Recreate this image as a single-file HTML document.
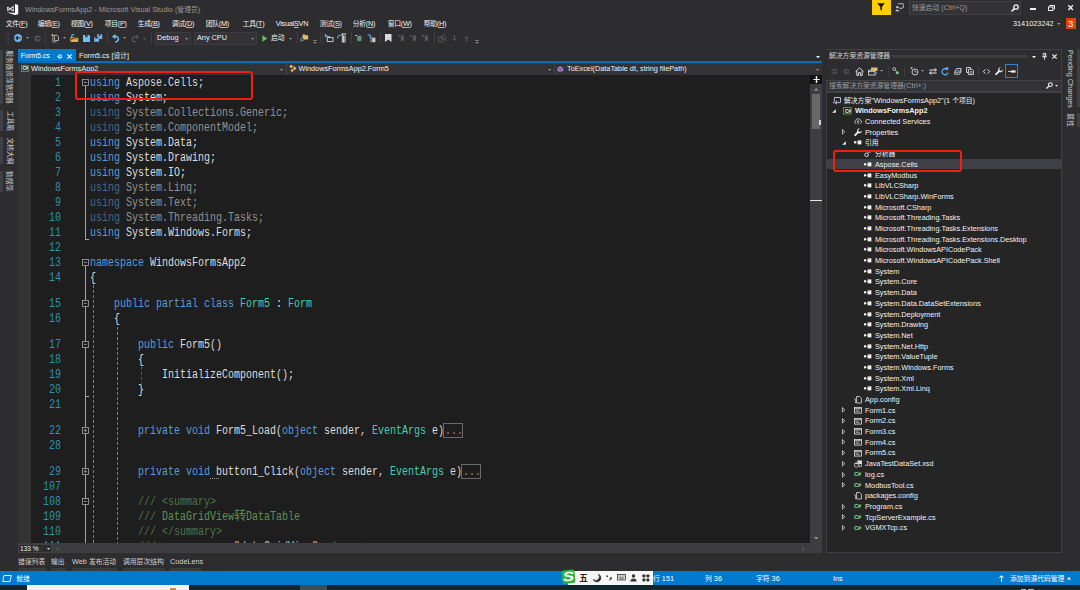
<!DOCTYPE html><html><head><meta charset="utf-8"><title>WindowsFormsApp2 - Microsoft Visual Studio</title><style>
html,body{margin:0;padding:0}
body{width:1080px;height:590px;overflow:hidden;background:#2d2d30;position:relative;font-family:"Liberation Sans","Noto Sans CJK SC",sans-serif;}
body div{position:absolute;box-sizing:border-box}
.t{height:12px;line-height:12px;white-space:pre;}
.k{font-size:6.8px}
.t u{text-decoration:underline;text-underline-offset:0.6px;text-decoration-thickness:0.5px;text-decoration-color:rgba(241,241,241,.7)}
.c{height:15px;line-height:15px;white-space:pre;font-family:"Liberation Mono","Noto Sans CJK SC",monospace;font-size:12px;transform:scaleX(0.83333);transform-origin:0 50%;color:#dcdcdc}
.c b{font-weight:normal;color:#569cd6}
.c i{font-style:normal;color:#4ec9b0}
.c u{text-decoration:none;color:#5f8f52}
.c s{text-decoration:none;color:#4f7346}
.c q{quotes:none;color:#c8c8c8}
.c em{font-style:normal;display:inline-block;width:14.4px;font-size:12px;line-height:10px;vertical-align:baseline;transform:scaleX(1.2);transform-origin:0 50%;font-family:"Noto Sans CJK SC",sans-serif}
.dim{opacity:.6}
.ln{height:15px;line-height:15px;white-space:pre;font-family:"Liberation Mono","Noto Sans CJK SC",monospace;font-size:12px;transform:scaleX(0.83333);transform-origin:100% 50%;color:#2b91af;text-align:right;width:40px}
svg{position:absolute;overflow:visible}
</style></head><body>
<svg style="left:0px;top:0px" width="24" height="18" viewBox="0 0 24 18"><path d="M15 4 18.2 4.9V14.2L15 15.1 6.6 12.2 15 13Z" fill="#ffffff"/><path d="M7 7.1 8 6.7 10.1 8.2 13.7 5.5V12.1L10.1 9.4 8 10.9 7 10.5Z M12.9 7.5 11.2 8.8 12.9 10.1Z M7.9 7.9V9.7L9 8.8Z" fill="#dcdcdc" fill-rule="evenodd"/></svg>
<div class="t" style="left:25px;top:3.5px;color:#999999;font-size:7.3px;">WindowsFormsApp2 - Microsoft Visual Studio (<span class="k">管理员</span>)</div>
<div style="left:872px;top:0px;width:19px;height:15px;background:#ffcd00;"></div>
<svg style="left:877.4px;top:3.2px" width="8" height="8" viewBox="0 0 8 8"><path d="M0.2 0.3H7.8L4.9 3.8V7.8L3.3 6.4V3.8Z" fill="#111111"/></svg>
<svg style="left:895px;top:2.6px" width="9" height="9" viewBox="0 0 10 10"><path d="M3 0.8H9.2V5.5H7.5L6.2 6.8V5.5H5" fill="none" stroke="#d0d0d0" stroke-width="0.9"/><circle cx="2.6" cy="4.6" r="1.3" fill="#d0d0d0"/><path d="M0.3 9.2C0.3 6.8 4.9 6.8 4.9 9.2Z" fill="#d0d0d0"/></svg>
<div style="left:909px;top:1px;width:112px;height:14px;background:#333337;border:1px solid #3f3f46"></div>
<div class="t" style="left:912px;top:2.2px;color:#999999;font-size:7.3px;"><span class="k">快速启动</span> (Ctrl+Q)</div>
<svg style="left:1011px;top:4px" width="8" height="8" viewBox="0 0 8 8"><circle cx="5" cy="3" r="2.2" fill="none" stroke="#f1f1f1" stroke-width="1.3"/><path d="M3.4 4.6 0.6 7.4" stroke="#f1f1f1" stroke-width="1.5"/></svg>
<div style="left:1030px;top:8px;width:6px;height:2px;background:#f1f1f1;"></div>
<svg style="left:1048px;top:4.8px" width="7" height="6" viewBox="0 0 7 6"><path d="M1.8 1.6V0.5H6.5V4H5.2" fill="none" stroke="#f1f1f1" stroke-width="1"/><rect x="0.5" y="2" width="4.4" height="3.5" fill="none" stroke="#f1f1f1" stroke-width="1"/></svg>
<svg style="left:1067.8px;top:5.4px" width="5.2" height="5.2" viewBox="0 0 5.2 5.2"><path d="M0.3 0.3 4.9 4.9M4.9 0.3 0.3 4.9" stroke="#f1f1f1" stroke-width="1.4"/></svg>
<div class="t" style="left:1013px;top:18px;color:#f1f1f1;font-size:7.3px;">3141023242</div>
<svg style="left:1056.7px;top:22.5px" width="3.6" height="2" viewBox="0 0 3.6 2"><path d="M0 0H3.6L1.8 2Z" fill="#999999"/></svg>
<div style="left:1065.5px;top:17.5px;width:10.8px;height:11.5px;background:#dc440b;"></div>
<div class="t" style="left:1068px;top:17.6px;color:#ffffff;font-size:9.5px;">3</div>
<div class="t" style="left:5.7px;top:17.5px;color:#f1f1f1;font-size:7.3px;letter-spacing:-0.25px"><span class="k">文件</span>(<u>F</u>)</div>
<div class="t" style="left:37.7px;top:17.5px;color:#f1f1f1;font-size:7.3px;letter-spacing:-0.25px"><span class="k">编辑</span>(<u>E</u>)</div>
<div class="t" style="left:70.7px;top:17.5px;color:#f1f1f1;font-size:7.3px;letter-spacing:-0.25px"><span class="k">视图</span>(<u>V</u>)</div>
<div class="t" style="left:104.7px;top:17.5px;color:#f1f1f1;font-size:7.3px;letter-spacing:-0.25px"><span class="k">项目</span>(<u>P</u>)</div>
<div class="t" style="left:137.7px;top:17.5px;color:#f1f1f1;font-size:7.3px;letter-spacing:-0.25px"><span class="k">生成</span>(<u>B</u>)</div>
<div class="t" style="left:171.7px;top:17.5px;color:#f1f1f1;font-size:7.3px;letter-spacing:-0.25px"><span class="k">调试</span>(<u>D</u>)</div>
<div class="t" style="left:205.7px;top:17.5px;color:#f1f1f1;font-size:7.3px;letter-spacing:-0.25px"><span class="k">团队</span>(<u>M</u>)</div>
<div class="t" style="left:242.7px;top:17.5px;color:#f1f1f1;font-size:7.3px;letter-spacing:-0.25px"><span class="k">工具</span>(<u>T</u>)</div>
<div class="t" style="left:275.7px;top:17.5px;color:#f1f1f1;font-size:7.3px;letter-spacing:-0.25px">Visual<u>S</u>VN</div>
<div class="t" style="left:319.7px;top:17.5px;color:#f1f1f1;font-size:7.3px;letter-spacing:-0.25px"><span class="k">测试</span>(<u>S</u>)</div>
<div class="t" style="left:352.7px;top:17.5px;color:#f1f1f1;font-size:7.3px;letter-spacing:-0.25px"><span class="k">分析</span>(<u>N</u>)</div>
<div class="t" style="left:387.7px;top:17.5px;color:#f1f1f1;font-size:7.3px;letter-spacing:-0.25px"><span class="k">窗口</span>(<u>W</u>)</div>
<div class="t" style="left:423.7px;top:17.5px;color:#f1f1f1;font-size:7.3px;letter-spacing:-0.25px"><span class="k">帮助</span>(<u>H</u>)</div>
<svg style="left:6px;top:32px" width="3" height="12" viewBox="0 0 3 12"><path d="M0.5 0V12M2.5 1V12" stroke="#46464a" stroke-width="1" stroke-dasharray="1 1"/></svg>
<svg style="left:14px;top:34px" width="8" height="8" viewBox="0 0 8 8"><circle cx="4" cy="4" r="3.9" fill="#6cb6f5"/><path d="M6.4 4H2.2M3.9 2.1 2 4 3.9 5.9" stroke="#1e1e1e" stroke-width="1.1" fill="none"/></svg>
<svg style="left:26.4px;top:37.1px" width="3.2" height="1.8" viewBox="0 0 3.2 1.8"><path d="M0 0H3.2L1.6 1.8Z" fill="#999"/></svg>
<svg style="left:33.5px;top:34.5px" width="7" height="7" viewBox="0 0 7 7"><circle cx="3.5" cy="3.5" r="3.1" fill="#555558"/><path d="M1.5 3.5H5.3M3.9 1.9 5.5 3.5 3.9 5.1" stroke="#2d2d30" stroke-width="1" fill="none"/></svg>
<div style="left:45px;top:32px;width:1px;height:12px;background:#3f3f43;"></div>
<svg style="left:50.8px;top:33.6px" width="8" height="8.2" viewBox="0 0 8 8.2"><path d="M3.4 1.2H6L7.4 2.6V6.6H3.4Z" fill="none" stroke="#d0d0d0" stroke-width="0.8"/><path d="M1.8 3V8H5.6" fill="none" stroke="#b0b0b0" stroke-width="0.8"/><path d="M1.6 -0.2 3 1.2 1.6 2.6 0.2 1.2Z" fill="#f0c060"/></svg>
<svg style="left:62.49999999999999px;top:37.1px" width="3.2" height="1.8" viewBox="0 0 3.2 1.8"><path d="M0 0H3.2L1.6 1.8Z" fill="#999"/></svg>
<svg style="left:69.6px;top:34px" width="8.6" height="8" viewBox="0 0 8.6 8"><path d="M0.8 7.4V3.4H3L3.8 4.2H7.8V7.4Z" fill="#3a3322" stroke="#e8b960" stroke-width="0.9"/><path d="M0.8 7.4 2.2 5.2H8.4L7.4 7.4Z" fill="#e8b960"/><path d="M1.6 3V2A1.6 1.6 0 0 1 3.2 0.6" fill="none" stroke="#5aa9ec" stroke-width="1.1"/><path d="M3 -0.4 4.6 0.7 3 1.8Z" fill="#5aa9ec"/></svg>
<svg style="left:82.9px;top:34.8px" width="7" height="7" viewBox="0 0 7 7"><path d="M0 0H6L7 1V7H0Z" fill="#75bdf7"/><rect x="2.2" y="0" width="2.6" height="2.2" fill="#2d2d30"/><rect x="3.6" y="0.4" width="0.8" height="1.4" fill="#75bdf7"/></svg>
<svg style="left:94.3px;top:34px" width="8.2" height="8" viewBox="0 0 8.2 8"><path d="M3.2 0H7.4L8.2 0.8V5H3.2Z" fill="#75bdf7"/><rect x="4.6" y="0" width="2" height="1.8" fill="#2d2d30"/><path d="M0 3H4.4L5.2 3.8V8H0Z" fill="#75bdf7" stroke="#2d2d30" stroke-width="0.5"/><rect x="1.4" y="3.2" width="2" height="1.6" fill="#2d2d30"/></svg>
<div style="left:107px;top:32px;width:1px;height:12px;background:#3f3f43;"></div>
<svg style="left:112px;top:33.8px" width="7.2" height="8.6" viewBox="0 0 7.2 8.6"><path d="M1.4 2.6H4A2.6 2.6 0 0 1 6 6.6L3.4 8.4" fill="none" stroke="#75bdf7" stroke-width="1.5"/><path d="M3.4 0 0 2.6 3.4 5.2Z" fill="#75bdf7"/></svg>
<svg style="left:123.4px;top:37.1px" width="3.2" height="1.8" viewBox="0 0 3.2 1.8"><path d="M0 0H3.2L1.6 1.8Z" fill="#999"/></svg>
<svg style="left:131px;top:34px" width="8" height="8" viewBox="0 0 8 8"><path d="M6.8 2.8H3.6A2.4 2.4 0 0 0 3.6 7.6H5" fill="none" stroke="#55555a" stroke-width="1.2"/><path d="M5.2 0.4 8 2.8 5.2 5.2Z" fill="#55555a"/></svg>
<svg style="left:143.4px;top:37.6px" width="3.2" height="1.8" viewBox="0 0 3.2 1.8"><path d="M0 0H3.2L1.6 1.8Z" fill="#5a5a5e"/></svg>
<div style="left:151px;top:32px;width:1px;height:12px;background:#3f3f43;"></div>
<div style="left:154.5px;top:31.5px;width:36.5px;height:13px;background:#333337;border:1px solid #3c3c40"></div>
<div class="t" style="left:157px;top:32.2px;color:#f1f1f1;font-size:7.3px;">Debug</div>
<svg style="left:185.4px;top:37.6px" width="3.2" height="1.8" viewBox="0 0 3.2 1.8"><path d="M0 0H3.2L1.6 1.8Z" fill="#999"/></svg>
<div style="left:194px;top:31.5px;width:63px;height:13px;background:#333337;border:1px solid #3c3c40"></div>
<div class="t" style="left:197px;top:32.2px;color:#f1f1f1;font-size:7.3px;">Any CPU</div>
<svg style="left:250.9px;top:37.6px" width="3.2" height="1.8" viewBox="0 0 3.2 1.8"><path d="M0 0H3.2L1.6 1.8Z" fill="#999"/></svg>
<svg style="left:262px;top:34.5px" width="6" height="7" viewBox="0 0 6 7"><path d="M0.3 0.2 5.6 3.5 0.3 6.8Z" fill="#5cc15c"/></svg>
<div class="t" style="left:271px;top:32.2px;color:#f1f1f1;font-size:7.3px;"><span class="k">启动</span></div>
<svg style="left:288.9px;top:37.6px" width="3.2" height="1.8" viewBox="0 0 3.2 1.8"><path d="M0 0H3.2L1.6 1.8Z" fill="#999"/></svg>
<div style="left:297px;top:32px;width:1px;height:12px;background:#3f3f43;"></div>
<svg style="left:300.3px;top:33.8px" width="8.6" height="8.6" viewBox="0 0 10 10"><path d="M3 0.5H6L6.8 1.4H9.5V6.5H3Z" fill="#e8b960"/><circle cx="2.8" cy="6" r="1.7" fill="#2d2d30" stroke="#7cc0f5" stroke-width="0.9"/><path d="M1.6 7.3 0.2 9" stroke="#7cc0f5" stroke-width="1"/></svg>
<svg style="left:312.5px;top:40px" width="4" height="4" viewBox="0 0 4 4"><path d="M0.3 0.5H3.7" stroke="#999" stroke-width="0.8"/><path d="M0.3 2H3.7L2 3.8Z" fill="#999"/></svg>
<svg style="left:320px;top:32px" width="3" height="12" viewBox="0 0 3 12"><path d="M0.5 0V12M2.5 1V12" stroke="#46464a" stroke-width="1" stroke-dasharray="1 1"/></svg>
<svg style="left:324px;top:33px" width="10" height="10" viewBox="0 0 10 10"><path d="M0.8 0.5 4 3 0.8 4.2Z" fill="#5aa9ec"/><rect x="3.2" y="4.6" width="5.8" height="4" fill="none" stroke="#d8d8d8" stroke-width="0.9"/><path d="M3.2 3.8H6" stroke="#d8d8d8" stroke-width="0.9"/></svg>
<svg style="left:337px;top:33px" width="10" height="10" viewBox="0 0 10 10"><path d="M1 2.4H4" stroke="#5aa9ec" stroke-width="1"/><path d="M4.2 1H9.2M5.3 1V9.6M8 2.4V9.6M6.6 2.4V9.6" stroke="#d8d8d8" stroke-width="1"/><path d="M0.8 3.2V5.5" stroke="#d8d8d8" stroke-width="0.8"/></svg>
<div style="left:351px;top:32px;width:1px;height:12px;background:#3f3f43;"></div>
<svg style="left:355px;top:34.5px" width="7" height="7" viewBox="0 0 7 7"><path d="M0 0.5H2" stroke="#d8d8d8" stroke-width="0.8"/><rect x="2.2" y="1" width="4.2" height="5.2" fill="#4d8a5a"/><path d="M2 1.2H6.5M2 3H6.5M2 4.8H6.5" stroke="#9a9a9a" stroke-width="0.6"/></svg>
<svg style="left:367px;top:33.5px" width="9" height="9" viewBox="0 0 9 9"><path d="M0.8 1.6Q2.3 0 3.4 1.4T2.4 3.6" fill="none" stroke="#5aa9ec" stroke-width="1.1"/><rect x="3.6" y="3.6" width="4.8" height="4.6" fill="#c8c8c8"/><path d="M4.8 3.6V8.2" stroke="#2d2d30" stroke-width="0.7"/></svg>
<div style="left:380px;top:32px;width:1px;height:12px;background:#3f3f43;"></div>
<svg style="left:385px;top:34px" width="7" height="8" viewBox="0 0 7 8"><path d="M0 0H6.5V8L3.25 5.6 0 8Z" fill="#dadada"/></svg>
<svg style="left:397px;top:34px" width="8" height="8" viewBox="0 0 8 8"><path d="M0.5 1.2 2.6 2.8M2.8 0.4V3" stroke="#58585c" stroke-width="0.9"/><path d="M3.8 1.6H7V7.6L5.4 6.2 3.8 7.6Z" fill="#58585c"/></svg>
<svg style="left:409px;top:34px" width="8" height="8" viewBox="0 0 8 8"><path d="M0.4 1.6H2.8M1.8 0.4 3 1.6 1.8 2.8" stroke="#58585c" stroke-width="0.9" fill="none"/><path d="M3.8 1.6H7V7.6L5.4 6.2 3.8 7.6Z" fill="#58585c"/></svg>
<svg style="left:421px;top:34px" width="8" height="8" viewBox="0 0 8 8"><path d="M0.4 0.6 3 2.8M3 0.6 0.4 2.8" stroke="#58585c" stroke-width="0.9"/><path d="M3.8 1.6H7V7.6L5.4 6.2 3.8 7.6Z" fill="#58585c"/></svg>
<div style="left:434px;top:32px;width:1px;height:12px;background:#3f3f43;"></div>
<svg style="left:438px;top:33.5px" width="9" height="9" viewBox="0 0 9 9"><rect x="0.5" y="3.2" width="4.4" height="4.6" fill="none" stroke="#58585c" stroke-width="0.9"/><circle cx="5.4" cy="3.2" r="2.3" fill="none" stroke="#58585c" stroke-width="0.9"/><path d="M6.8 5 8.6 7.4" stroke="#58585c" stroke-width="1"/></svg>
<svg style="left:451.5px;top:35px" width="5" height="6" viewBox="0 0 5 6"><path d="M2.5 0V5.4M0.4 3.4 2.5 5.6 4.6 3.4" stroke="#58585c" stroke-width="0.9" fill="none"/></svg>
<svg style="left:464px;top:35.5px" width="5" height="6" viewBox="0 0 5 6"><path d="M2.5 6V0.6M0.4 2.6 2.5 0.4 4.6 2.6" stroke="#58585c" stroke-width="0.9" fill="none"/></svg>
<svg style="left:474.5px;top:40px" width="4" height="4" viewBox="0 0 4 4"><path d="M0.3 0.5H3.7" stroke="#999" stroke-width="0.8"/><path d="M0.3 2H3.7L2 3.8Z" fill="#999"/></svg>
<div style="left:0px;top:49.5px;width:3px;height:54.5px;background:#3f3f46;"></div>
<div class="t" style="left:-18.25px;top:70.75px;width:54.5px;text-align:center;color:#d0d0d0;font-size:6.7px;transform:rotate(90deg);transform-origin:50% 50%">服务器资源管理器</div>
<div style="left:0px;top:110px;width:3px;height:21px;background:#3f3f46;"></div>
<div class="t" style="left:-1.5px;top:114.5px;width:21px;text-align:center;color:#d0d0d0;font-size:6.7px;transform:rotate(90deg);transform-origin:50% 50%">工具箱</div>
<div style="left:0px;top:137px;width:3px;height:27px;background:#3f3f46;"></div>
<div class="t" style="left:-4.5px;top:144.5px;width:27px;text-align:center;color:#d0d0d0;font-size:6.7px;transform:rotate(90deg);transform-origin:50% 50%">文档大纲</div>
<div style="left:0px;top:171px;width:3px;height:20.5px;background:#3f3f46;"></div>
<div class="t" style="left:-1.25px;top:175.25px;width:20.5px;text-align:center;color:#d0d0d0;font-size:6.7px;transform:rotate(90deg);transform-origin:50% 50%">数据源</div>
<div style="left:18px;top:49px;width:58px;height:14px;background:#007acc;"></div>
<div class="t" style="left:20.8px;top:50.3px;color:#ffffff;font-size:7.3px;letter-spacing:-0.2px">Form5.cs</div>
<svg style="left:56.5px;top:53.5px" width="6" height="5" viewBox="0 0 6 5"><path d="M0 2.5H1.8" stroke="#d6ebfa" stroke-width="0.8"/><path d="M2 1H4.6V4H2Z" fill="none" stroke="#d6ebfa" stroke-width="0.8"/><path d="M2 3.4H4.6" stroke="#d6ebfa" stroke-width="1"/><path d="M1.9 0.3V4.7" stroke="#d6ebfa" stroke-width="0.8"/></svg>
<svg style="left:67px;top:53.8px" width="5" height="5" viewBox="0 0 5 5"><path d="M0.3 0.3 4.7 4.7M4.7 0.3 0.3 4.7" stroke="#ffffff" stroke-width="1.1"/></svg>
<div class="t" style="left:79px;top:50.3px;color:#f1f1f1;font-size:7.3px;">Form5.cs [<span class="k">设计</span>]</div>
<svg style="left:816.0px;top:55.9px" width="4" height="2.2" viewBox="0 0 4 2.2"><path d="M0 0H4L2.0 2.2Z" fill="#f1f1f1"/></svg>
<div style="left:18px;top:61px;width:804px;height:1px;background:#10669f;"></div>
<div style="left:18px;top:62px;width:804px;height:1px;background:#0474c2;"></div>
<div style="left:18px;top:63.2px;width:804px;height:11.8px;background:#2d2d30;"></div>
<div style="left:18px;top:63px;width:268.6px;height:12px;background:#333337;border-right:1px solid #434346"></div>
<div style="left:286.6px;top:63px;width:268.4px;height:12px;background:#333337;border-right:1px solid #434346"></div>
<div style="left:555px;top:63px;width:267px;height:12px;background:#333337;"></div>
<svg style="left:21px;top:64.6px" width="7.7" height="7.4" viewBox="0 0 7.5 6.5"><rect x="0.4" y="0.4" width="6.7" height="5.7" fill="none" stroke="#6aa84f" stroke-width="0.8"/></svg>
<div class="t" style="left:22.4px;top:63.4px;color:#f1f1f1;font-size:4.8px;font-weight:bold;letter-spacing:-0.3px">C#</div>
<div class="t" style="left:31px;top:63.2px;color:#f1f1f1;font-size:7.3px;">WindowsFormsApp2</div>
<svg style="left:280.4px;top:68.6px" width="3.2" height="1.8" viewBox="0 0 3.2 1.8"><path d="M0 0H3.2L1.6 1.8Z" fill="#999"/></svg>
<svg style="left:289px;top:64.2px" width="8.4" height="8.4" viewBox="0 0 8 8"><path d="M2 0.5 3.8 2.3 2 4.1 0.2 2.3Z" fill="#e8b960"/><path d="M5.4 2.4 7.2 4.2 5.4 6 3.6 4.2Z" fill="#e8b960"/><path d="M3 4.6 4.6 6.2 3 7.8 1.4 6.2Z" fill="#e8b960"/><path d="M3.6 2.3H5.4V2.6M3 4.2V4.6" stroke="#c0c0c0" stroke-width="0.5" fill="none"/></svg>
<div class="t" style="left:298.5px;top:63.2px;color:#f1f1f1;font-size:7.3px;">WindowsFormsApp2.Form5</div>
<svg style="left:548.4px;top:68.6px" width="3.2" height="1.8" viewBox="0 0 3.2 1.8"><path d="M0 0H3.2L1.6 1.8Z" fill="#999"/></svg>
<svg style="left:557px;top:66px" width="6.5" height="6.5" viewBox="0 0 6.5 6.5"><path d="M3.25 0.2 6.2 1.7V4.8L3.25 6.3 0.3 4.8V1.7Z" fill="#a77fd4"/><path d="M0.6 1.8 3.25 3.2 5.9 1.8M3.25 3.2V6" stroke="#3a2a55" stroke-width="0.5" fill="none"/></svg>
<div class="t" style="left:567px;top:63.2px;color:#f1f1f1;font-size:7.3px;">ToExcel(DataTable dt, string filePath)</div>
<svg style="left:816.4px;top:68.6px" width="3.2" height="1.8" viewBox="0 0 3.2 1.8"><path d="M0 0H3.2L1.6 1.8Z" fill="#999"/></svg>
<div style="left:18px;top:75px;width:791.5px;height:469px;background:#1e1e1e;"></div>
<div style="left:18px;top:75px;width:13.3px;height:469px;background:#333333;"></div>
<div style="left:18px;top:75px;width:791.5px;height:469px;overflow:hidden">
<div class="ln" style="left:3px;top:1.3px">1</div>
<div class="c" style="left:72px;top:1.3px"><b>using</b> Aspose.Cells;</div>
<div class="ln" style="left:3px;top:16.3px">2</div>
<div class="c" style="left:72px;top:16.3px"><b>using</b> System;</div>
<div class="ln" style="left:3px;top:31.3px">3</div>
<div class="c dim" style="left:72px;top:31.3px"><b>using</b> System.Collections.Generic;</div>
<div class="ln" style="left:3px;top:46.3px">4</div>
<div class="c dim" style="left:72px;top:46.3px"><b>using</b> System.ComponentModel;</div>
<div class="ln" style="left:3px;top:61.3px">5</div>
<div class="c" style="left:72px;top:61.3px"><b>using</b> System.Data;</div>
<div class="ln" style="left:3px;top:76.3px">6</div>
<div class="c" style="left:72px;top:76.3px"><b>using</b> System.Drawing;</div>
<div class="ln" style="left:3px;top:91.3px">7</div>
<div class="c" style="left:72px;top:91.3px"><b>using</b> System.IO;</div>
<div class="ln" style="left:3px;top:106.3px">8</div>
<div class="c dim" style="left:72px;top:106.3px"><b>using</b> System.Linq;</div>
<div class="ln" style="left:3px;top:121.3px">9</div>
<div class="c dim" style="left:72px;top:121.3px"><b>using</b> System.Text;</div>
<div class="ln" style="left:3px;top:136.3px">10</div>
<div class="c dim" style="left:72px;top:136.3px"><b>using</b> System.Threading.Tasks;</div>
<div class="ln" style="left:3px;top:151.3px">11</div>
<div class="c" style="left:72px;top:151.3px"><b>using</b> System.Windows.Forms;</div>
<div class="ln" style="left:3px;top:166.3px">12</div>
<div class="ln" style="left:3px;top:181.3px">13</div>
<div class="c" style="left:72px;top:181.3px"><b>namespace</b> WindowsFormsApp2</div>
<div class="ln" style="left:3px;top:196.3px">14</div>
<div class="c" style="left:72px;top:196.3px">{</div>
<div class="ln" style="left:3px;top:222.3px">15</div>
<div class="c" style="left:72px;top:222.3px">    <b>public</b> <b>partial</b> <b>class</b> <i>Form5</i> : <i>Form</i></div>
<div class="ln" style="left:3px;top:237.3px">16</div>
<div class="c" style="left:72px;top:237.3px">    {</div>
<div class="ln" style="left:3px;top:263.3px">17</div>
<div class="c" style="left:72px;top:263.3px">        <b>public</b> Form5()</div>
<div class="ln" style="left:3px;top:278.3px">18</div>
<div class="c" style="left:72px;top:278.3px">        {</div>
<div class="ln" style="left:3px;top:293.3px">19</div>
<div class="c" style="left:72px;top:293.3px">            InitializeComponent();</div>
<div class="ln" style="left:3px;top:308.3px">20</div>
<div class="c" style="left:72px;top:308.3px">        }</div>
<div class="ln" style="left:3px;top:323.3px">21</div>
<div class="ln" style="left:3px;top:349.3px">22</div>
<div class="c" style="left:72px;top:349.3px">        <b>private</b> <b>void</b> Form5_Load(<b>object</b> sender, <i>EventArgs</i> e)</div>
<div class="ln" style="left:3px;top:364.3px">28</div>
<div class="ln" style="left:3px;top:390.3px">29</div>
<div class="c" style="left:72px;top:390.3px">        <b>private</b> <b>void</b> button1_Click(<b>object</b> sender, <i>EventArgs</i> e)</div>
<div class="ln" style="left:3px;top:405.3px">107</div>
<div class="ln" style="left:3px;top:420.3px">108</div>
<div class="c" style="left:72px;top:420.3px">        <s>///</s> <s>&lt;summary&gt;</s></div>
<div class="ln" style="left:3px;top:435.3px">109</div>
<div class="c" style="left:72px;top:435.3px">        <s>///</s> <u>DataGridView<em>转</em>DataTable</u></div>
<div class="ln" style="left:3px;top:450.3px">110</div>
<div class="c" style="left:72px;top:450.3px">        <s>///</s> <s>&lt;/summary&gt;</s></div>
<div class="ln" style="left:3px;top:465.3px">111</div>
<div class="c" style="left:72px;top:465.3px">        <s>///</s> <s>&lt;param name=</s><q>"dataGridView"</q><s>&gt;&lt;/param&gt;</s></div>
</div>
<div style="left:85px;top:86px;width:1px;height:153.5px;background:#a5a5a5;"></div>
<div style="left:85px;top:239px;width:4px;height:1px;background:#a5a5a5;"></div>
<div style="left:85px;top:266px;width:1px;height:278px;background:#a5a5a5;"></div>
<div style="left:85px;top:396px;width:4px;height:1px;background:#a5a5a5;"></div>
<svg style="left:82px;top:78.69999999999999px" width="6.8" height="6.8" viewBox="0 0 6.8 6.8"><rect x="0.4" y="0.4" width="6" height="6" fill="#1e1e1e" stroke="#a5a5a5" stroke-width="0.8"/><path d="M1.8 3.4H5" stroke="#a5a5a5" stroke-width="0.8"/></svg>
<svg style="left:82px;top:258.70000000000005px" width="6.8" height="6.8" viewBox="0 0 6.8 6.8"><rect x="0.4" y="0.4" width="6" height="6" fill="#1e1e1e" stroke="#a5a5a5" stroke-width="0.8"/><path d="M1.8 3.4H5" stroke="#a5a5a5" stroke-width="0.8"/></svg>
<svg style="left:82px;top:299.70000000000005px" width="6.8" height="6.8" viewBox="0 0 6.8 6.8"><rect x="0.4" y="0.4" width="6" height="6" fill="#1e1e1e" stroke="#a5a5a5" stroke-width="0.8"/><path d="M1.8 3.4H5" stroke="#a5a5a5" stroke-width="0.8"/></svg>
<svg style="left:82px;top:340.70000000000005px" width="6.8" height="6.8" viewBox="0 0 6.8 6.8"><rect x="0.4" y="0.4" width="6" height="6" fill="#1e1e1e" stroke="#a5a5a5" stroke-width="0.8"/><path d="M1.8 3.4H5" stroke="#a5a5a5" stroke-width="0.8"/></svg>
<svg style="left:82px;top:497.70000000000005px" width="6.8" height="6.8" viewBox="0 0 6.8 6.8"><rect x="0.4" y="0.4" width="6" height="6" fill="#1e1e1e" stroke="#a5a5a5" stroke-width="0.8"/><path d="M1.8 3.4H5" stroke="#a5a5a5" stroke-width="0.8"/></svg>
<svg style="left:82px;top:426.70000000000005px" width="6.8" height="6.8" viewBox="0 0 6.8 6.8"><rect x="0.4" y="0.4" width="6" height="6" fill="#1e1e1e" stroke="#a5a5a5" stroke-width="0.8"/><path d="M1.8 3.4H5" stroke="#a5a5a5" stroke-width="0.8"/><path d="M3.4 1.8V5" stroke="#a5a5a5" stroke-width="0.8"/></svg>
<svg style="left:82px;top:467.70000000000005px" width="6.8" height="6.8" viewBox="0 0 6.8 6.8"><rect x="0.4" y="0.4" width="6" height="6" fill="#1e1e1e" stroke="#a5a5a5" stroke-width="0.8"/><path d="M1.8 3.4H5" stroke="#a5a5a5" stroke-width="0.8"/><path d="M3.4 1.8V5" stroke="#a5a5a5" stroke-width="0.8"/></svg>
<div style="left:93px;top:285px;width:1px;height:259px;background-image:linear-gradient(#7c7c7c 58%,transparent 58%);background-size:1px 5px"></div>
<div style="left:117px;top:327px;width:1px;height:217px;background-image:linear-gradient(#7c7c7c 58%,transparent 58%);background-size:1px 5px"></div>
<div style="left:141px;top:367px;width:1px;height:16px;background-image:linear-gradient(#585858 58%,transparent 58%);background-size:1px 5px"></div>
<div style="left:443px;top:423.09999999999997px;width:20px;height:14.6px;background:transparent;border:0.8px solid #6a6a6a"></div>
<div class="c" style="left:444.5px;top:424.3px;color:#8a8a8a">...</div>
<div style="left:461px;top:464.09999999999997px;width:20px;height:14.6px;background:transparent;border:0.8px solid #6a6a6a"></div>
<div class="c" style="left:462.5px;top:465.3px;color:#8a8a8a">...</div>
<div style="left:210px;top:478px;width:10px;height:1px;background-image:linear-gradient(90deg,#9a9a9a 50%,transparent 50%);background-size:2px 1px"></div>
<div style="left:809.5px;top:75px;width:12.5px;height:469px;background:#3e3e42;"></div>
<div style="left:809.5px;top:75px;width:12.5px;height:9px;background:#111111;"></div>
<svg style="left:812.5px;top:76px" width="7" height="7" viewBox="0 0 7 7"><path d="M3.5 0V7M0.3 3.5H6.7" stroke="#f1f1f1" stroke-width="1.2"/><path d="M2 1.6 3.5 0.2 5 1.6ZM2 5.4 3.5 6.8 5 5.4Z" fill="#f1f1f1"/></svg>
<svg style="left:813.5px;top:88px" width="4.4" height="2.6" viewBox="0 0 4.4 2.6"><path d="M0 2.6 2.2 0 4.4 2.6Z" fill="#999"/></svg>
<div style="left:811.5px;top:94px;width:8.5px;height:34.5px;background:#686868;"></div>
<div style="left:818.5px;top:119.5px;width:2.2px;height:5px;background:#d0d0d0;"></div>
<div style="left:809.5px;top:200px;width:12.5px;height:0.8px;background:#e6e6e6;"></div>
<svg style="left:813.5px;top:537px" width="4.4" height="2.6" viewBox="0 0 4.4 2.6"><path d="M0 0H4.4L2.2 2.6Z" fill="#999"/></svg>
<div style="left:18px;top:543px;width:804px;height:10px;background:#3e3e42;"></div>
<div style="left:18px;top:543.5px;width:33.8px;height:9.5px;background:#2d2d30;border:1px solid #434346"></div>
<div class="t" style="left:20px;top:542.6px;color:#f1f1f1;font-size:6.6px;">133 %</div>
<svg style="left:47.3px;top:547.9499999999999px" width="3" height="1.7" viewBox="0 0 3 1.7"><path d="M0 0H3L1.5 1.7Z" fill="#f1f1f1"/></svg>
<svg style="left:55.8px;top:546.8px" width="2.6" height="4" viewBox="0 0 2.6 4"><path d="M2.6 0V4L0 2Z" fill="#55555a"/></svg>
<svg style="left:802px;top:547px" width="2.6" height="4" viewBox="0 0 2.6 4"><path d="M0 0V4L2.6 2Z" fill="#55555a"/></svg>
<div style="left:809.5px;top:544px;width:12.5px;height:9px;background:#3e3e42;"></div>
<div class="t" style="left:829px;top:50.3px;color:#d0d0d0;font-size:7.3px;"><span class="k">解决方案资源管理器</span></div>
<div style="left:892px;top:55px;width:136px;height:3px;background-image:linear-gradient(90deg,#4a4a50 50%,transparent 50%),linear-gradient(90deg,transparent 50%,#4a4a50 50%),linear-gradient(90deg,#4a4a50 50%,transparent 50%);background-size:2px 1px;background-position:0 0,0 1px,0 2px;background-repeat:repeat-x"></div>
<div style="left:826px;top:49px;width:236px;height:1px;background:#3f3f46;"></div>
<div style="left:1061px;top:49px;width:1px;height:504px;background:#3f3f46;"></div>
<div style="left:825px;top:49px;width:1px;height:504px;background:#2a2a2d;"></div>
<svg style="left:1032.0px;top:55.9px" width="4" height="2.2" viewBox="0 0 4 2.2"><path d="M0 0H4L2.0 2.2Z" fill="#f1f1f1"/></svg>
<svg style="left:1041.5px;top:53px" width="5" height="7" viewBox="0 0 5 7"><path d="M1.2 0.4H3.8V3.6H1.2Z" fill="none" stroke="#f1f1f1" stroke-width="0.8"/><path d="M3.2 0.4V3.6" stroke="#f1f1f1" stroke-width="1"/><path d="M0.2 3.8H4.8M2.5 3.8V6.8" stroke="#f1f1f1" stroke-width="0.8"/></svg>
<svg style="left:1051.5px;top:54.3px" width="5" height="5" viewBox="0 0 5 5"><path d="M0.3 0.3 4.7 4.7M4.7 0.3 0.3 4.7" stroke="#f1f1f1" stroke-width="1.1"/></svg>
<svg style="left:830.5px;top:67.5px" width="7" height="7" viewBox="0 0 7 7"><circle cx="3.5" cy="3.5" r="3" fill="#4a4a4e"/><path d="M5.3 3.5H1.9M3.2 2.2 1.8 3.5 3.2 4.8" stroke="#2d2d30" stroke-width="0.8" fill="none"/></svg>
<svg style="left:843px;top:67.5px" width="7" height="7" viewBox="0 0 7 7"><circle cx="3.5" cy="3.5" r="3" fill="#4a4a4e"/><path d="M1.7 3.5H5.1M3.8 2.2 5.2 3.5 3.8 4.8" stroke="#2d2d30" stroke-width="0.8" fill="none"/></svg>
<svg style="left:855px;top:66.5px" width="9" height="9" viewBox="0 0 9 9"><path d="M0.6 4.6 4.5 0.8 8.4 4.6M1.8 3.8V8.4H3.6V5.6H5.4V8.4H7.2V3.8" fill="none" stroke="#f1f1f1" stroke-width="0.9"/></svg>
<svg style="left:868px;top:66.5px" width="10" height="9" viewBox="0 0 10 9"><path d="M3 0.5H9.5V4H3Z" fill="#e8b960"/><rect x="0.6" y="3.2" width="6.4" height="4.8" fill="#2d2d30" stroke="#d8d8d8" stroke-width="0.9"/><path d="M0.6 4.6H7" stroke="#d8d8d8" stroke-width="0.9"/><path d="M8.2 5V7.2H7.2" stroke="#5aa9ec" stroke-width="0.9" fill="none"/></svg>
<svg style="left:880.4px;top:70.3px" width="3.2" height="1.8" viewBox="0 0 3.2 1.8"><path d="M0 0H3.2L1.6 1.8Z" fill="#999"/></svg>
<div style="left:888px;top:65.5px;width:1px;height:11px;background:#3d3d41;"></div>
<svg style="left:892px;top:67px" width="7" height="8" viewBox="0 0 7 8"><circle cx="2.2" cy="2" r="1.5" fill="none" stroke="#c8c8c8" stroke-width="0.8"/><path d="M3.3 3 4.6 4.6" stroke="#c8c8c8" stroke-width="0.8"/><circle cx="5.3" cy="5.8" r="1.5" fill="#7ed07e"/></svg>
<div style="left:904px;top:65.5px;width:1px;height:11px;background:#3d3d41;"></div>
<svg style="left:910px;top:66.5px" width="9" height="9" viewBox="0 0 9 9"><circle cx="5" cy="5" r="3" fill="none" stroke="#d8d8d8" stroke-width="0.9"/><path d="M5 3.4V5H6.4" stroke="#d8d8d8" stroke-width="0.8" fill="none"/><path d="M0.2 0.6H3L1.6 2.4Z" fill="#d8d8d8"/></svg>
<svg style="left:921.4px;top:70.3px" width="3.2" height="1.8" viewBox="0 0 3.2 1.8"><path d="M0 0H3.2L1.6 1.8Z" fill="#999"/></svg>
<svg style="left:929px;top:67.5px" width="8" height="7" viewBox="0 0 8 7"><path d="M0.4 2H7.4M5.6 0.4 7.4 2 5.6 3.6M7.6 5H0.6M2.4 3.4 0.6 5 2.4 6.6" fill="none" stroke="#f1f1f1" stroke-width="0.95"/></svg>
<svg style="left:941px;top:66.8px" width="8" height="8.4" viewBox="0 0 8 8.4"><path d="M6.6 3.2A3 3 0 1 0 6.9 5.6" fill="none" stroke="#5aa9ec" stroke-width="1.3"/><path d="M4.4 0 7.6 0.6 6.8 3.8Z" fill="#5aa9ec"/></svg>
<svg style="left:953.5px;top:67.5px" width="8" height="7" viewBox="0 0 8 7"><path d="M2.4 0.6H7.4L5.6 4.2H0.6Z" fill="none" stroke="#d8d8d8" stroke-width="0.9"/><path d="M0.6 4.6V6.2H5.6L7.4 2.6" fill="none" stroke="#d8d8d8" stroke-width="0.9"/><path d="M2.8 2.6H5" stroke="#5aa9ec" stroke-width="0.9"/></svg>
<svg style="left:966px;top:67px" width="8" height="8" viewBox="0 0 8 8"><path d="M0.5 0.5H4.5V2M0.5 0.5V5.5H2" fill="none" stroke="#d8d8d8" stroke-width="0.9"/><path d="M2.4 2.2H6L7.5 3.7V7.6H2.4Z" fill="none" stroke="#d8d8d8" stroke-width="0.9"/><circle cx="5" cy="5.4" r="1.1" fill="none" stroke="#d8d8d8" stroke-width="0.7"/></svg>
<div style="left:978px;top:65.5px;width:1px;height:11px;background:#3d3d41;"></div>
<svg style="left:983px;top:68.5px" width="7" height="5" viewBox="0 0 7 5"><path d="M2.4 0.3 0.4 2.5 2.4 4.7M4.6 0.3 6.6 2.5 4.6 4.7" fill="none" stroke="#f1f1f1" stroke-width="0.9"/></svg>
<svg style="left:994.8px;top:66.8px" width="8.3" height="8.3" viewBox="0 0 8.3 8.3"><path d="M5.7 0.3A2.6 2.6 0 0 0 3.2 3.8L0.3 6.7A0.95 0.95 0 0 0 1.6 8L4.5 5.1A2.6 2.6 0 0 0 8 2.6L6.3 4 4.6 3.6 4.2 2Z" fill="#f1f1f1"/></svg>
<div style="left:1005px;top:64.3px;width:13.3px;height:13.3px;background:transparent;border:1px solid #2f86d6"></div>
<svg style="left:1008px;top:69.5px" width="8" height="3" viewBox="0 0 8 3"><path d="M0 1.5H3" stroke="#f1f1f1" stroke-width="0.8"/><rect x="3" y="0.4" width="4.6" height="2.2" fill="#f1f1f1"/></svg>
<div style="left:826px;top:80px;width:235.5px;height:11.5px;background:#333337;border:0.5px solid #434346"></div>
<div class="t" style="left:829px;top:80px;color:#999999;font-size:7.3px;"><span class="k">搜索解决方案资源管理器</span>(Ctrl+;)</div>
<svg style="left:1045.5px;top:82px" width="7" height="7" viewBox="0 0 7 7"><circle cx="4.4" cy="2.6" r="1.9" fill="none" stroke="#f1f1f1" stroke-width="1.1"/><path d="M3 4 0.5 6.5" stroke="#f1f1f1" stroke-width="1.3"/></svg>
<svg style="left:1055.2px;top:85.35000000000001px" width="3" height="1.7" viewBox="0 0 3 1.7"><path d="M0 0H3L1.5 1.7Z" fill="#f1f1f1"/></svg>
<div style="left:826px;top:91.5px;width:235.5px;height:461.5px;background:#252526;border:0.5px solid #3f3f46"></div>
<div style="left:826.5px;top:158.8px;width:234.5px;height:10.7px;background:#3f3f46;"></div>
<svg style="left:832.5px;top:96.60000000000001px" width="8" height="7.4" viewBox="0 0 8 7.4"><path d="M1.4 4V0.5H7.5V5.6H4.6" fill="none" stroke="#e0e0e0" stroke-width="0.8"/><path d="M3.4 3.4 4.4 3.9V6.9L3.4 7.4 1.6 5.9 0.7 6.6 0.2 6.4V4.4L0.7 4.2 1.6 4.9Z" fill="#b884e0"/></svg>
<div class="t" style="left:844.0px;top:94.7px;color:#f1f1f1;font-size:7.3px;"><span class="k">解决方案</span>"WindowsFormsApp2"(1 <span class="k">个项目</span>)</div>
<svg style="left:832.0px;top:108.79px" width="4" height="4" viewBox="0 0 4 4"><path d="M3.8 0.2V3.8H0.2Z" fill="#f1f1f1"/></svg>
<svg style="left:843.3px;top:106.99px" width="8.6" height="7.4" viewBox="0 0 8.6 7.4"><rect x="0.4" y="0.4" width="7.8" height="6.6" fill="none" stroke="#6aa84f" stroke-width="0.8"/></svg>
<div class="t" style="left:845.1px;top:105.59px;color:#f1f1f1;font-size:4.8px;font-weight:bold;letter-spacing:-0.3px">C#</div>
<div class="t" style="left:855.0px;top:105.39px;color:#f1f1f1;font-size:7.3px;"><b>WindowsFormsApp2</b></div>
<svg style="left:853.5px;top:118.38px" width="8.5" height="6.6" viewBox="0 0 8.5 6.6"><path d="M2.2 5.4H1.8A1.5 1.5 0 0 1 1.8 2.5A2.3 2.3 0 0 1 6.2 2.1A1.7 1.7 0 0 1 6.4 5.4H6" fill="none" stroke="#d8d8d8" stroke-width="0.8"/><path d="M4.1 2.8V6.4M2.9 4 4.1 2.7 5.3 4" fill="none" stroke="#d8d8d8" stroke-width="0.8"/></svg>
<div class="t" style="left:865.0px;top:116.08px;color:#f1f1f1;font-size:7.3px;">Connected Services</div>
<svg style="left:841.5px;top:129.47px" width="3.2" height="5.6" viewBox="0 0 3.2 5.6"><path d="M0.4 0.5 2.8 2.8 0.4 5.1Z" fill="none" stroke="#f1f1f1" stroke-width="0.7"/></svg>
<svg style="left:853.5px;top:128.47px" width="8" height="8" viewBox="0 0 8 8"><path d="M5.7 0.3A2.6 2.6 0 0 0 3.2 3.8L0.3 6.7A0.95 0.95 0 0 0 1.6 8L4.5 5.1A2.6 2.6 0 0 0 8 2.6L6.3 4 4.6 3.6 4.2 2Z" fill="#f1f1f1"/></svg>
<div class="t" style="left:865.0px;top:126.77px;color:#f1f1f1;font-size:7.3px;">Properties</div>
<svg style="left:841.5px;top:140.86px" width="4" height="4" viewBox="0 0 4 4"><path d="M3.8 0.2V3.8H0.2Z" fill="#f1f1f1"/></svg>
<svg style="left:853.5px;top:140.46px" width="8" height="5" viewBox="0 0 8 5"><rect x="0" y="1.2" width="2" height="2.2" fill="#f1f1f1"/><path d="M2 2.3H3.6" stroke="#f1f1f1" stroke-width="0.6"/><rect x="3.6" y="0.4" width="3.8" height="4" fill="#f1f1f1"/></svg>
<div class="t" style="left:865.0px;top:137.46px;color:#f1f1f1;font-size:7.3px;"><span class="k">引用</span></div>
<svg style="left:863.5px;top:151.05px" width="8" height="6.5" viewBox="0 0 8 6.5"><circle cx="2.6" cy="3.8" r="1.8" fill="none" stroke="#e0e0e0" stroke-width="1"/><path d="M4 2.4 5.4 1" stroke="#e0e0e0" stroke-width="0.9"/><path d="M5.2 0.3 6.6 0.6 6.3 2Z" fill="#e0e0e0"/></svg>
<div class="t" style="left:875.0px;top:148.15px;color:#f1f1f1;font-size:7.3px;"><span class="k">分析器</span></div>
<svg style="left:863.5px;top:161.84px" width="8" height="5" viewBox="0 0 8 5"><rect x="0" y="1.2" width="2" height="2.2" fill="#f1f1f1"/><path d="M2 2.3H3.6" stroke="#f1f1f1" stroke-width="0.6"/><rect x="3.6" y="0.4" width="3.8" height="4" fill="#f1f1f1"/></svg>
<div class="t" style="left:875.0px;top:158.84px;color:#f1f1f1;font-size:7.3px;">Aspose.Cells</div>
<svg style="left:863.5px;top:172.53px" width="8" height="5" viewBox="0 0 8 5"><rect x="0" y="1.2" width="2" height="2.2" fill="#f1f1f1"/><path d="M2 2.3H3.6" stroke="#f1f1f1" stroke-width="0.6"/><rect x="3.6" y="0.4" width="3.8" height="4" fill="#f1f1f1"/></svg>
<div class="t" style="left:875.0px;top:169.53px;color:#f1f1f1;font-size:7.3px;">EasyModbus</div>
<svg style="left:863.5px;top:183.22px" width="8" height="5" viewBox="0 0 8 5"><rect x="0" y="1.2" width="2" height="2.2" fill="#f1f1f1"/><path d="M2 2.3H3.6" stroke="#f1f1f1" stroke-width="0.6"/><rect x="3.6" y="0.4" width="3.8" height="4" fill="#f1f1f1"/></svg>
<div class="t" style="left:875.0px;top:180.22px;color:#f1f1f1;font-size:7.3px;">LibVLCSharp</div>
<svg style="left:863.5px;top:193.91px" width="8" height="5" viewBox="0 0 8 5"><rect x="0" y="1.2" width="2" height="2.2" fill="#f1f1f1"/><path d="M2 2.3H3.6" stroke="#f1f1f1" stroke-width="0.6"/><rect x="3.6" y="0.4" width="3.8" height="4" fill="#f1f1f1"/></svg>
<div class="t" style="left:875.0px;top:190.91px;color:#f1f1f1;font-size:7.3px;">LibVLCSharp.WinForms</div>
<svg style="left:863.5px;top:204.6px" width="8" height="5" viewBox="0 0 8 5"><rect x="0" y="1.2" width="2" height="2.2" fill="#f1f1f1"/><path d="M2 2.3H3.6" stroke="#f1f1f1" stroke-width="0.6"/><rect x="3.6" y="0.4" width="3.8" height="4" fill="#f1f1f1"/></svg>
<div class="t" style="left:875.0px;top:201.6px;color:#f1f1f1;font-size:7.3px;">Microsoft.CSharp</div>
<svg style="left:863.5px;top:215.29px" width="8" height="5" viewBox="0 0 8 5"><rect x="0" y="1.2" width="2" height="2.2" fill="#f1f1f1"/><path d="M2 2.3H3.6" stroke="#f1f1f1" stroke-width="0.6"/><rect x="3.6" y="0.4" width="3.8" height="4" fill="#f1f1f1"/></svg>
<div class="t" style="left:875.0px;top:212.29px;color:#f1f1f1;font-size:7.3px;">Microsoft.Threading.Tasks</div>
<svg style="left:863.5px;top:225.98000000000002px" width="8" height="5" viewBox="0 0 8 5"><rect x="0" y="1.2" width="2" height="2.2" fill="#f1f1f1"/><path d="M2 2.3H3.6" stroke="#f1f1f1" stroke-width="0.6"/><rect x="3.6" y="0.4" width="3.8" height="4" fill="#f1f1f1"/></svg>
<div class="t" style="left:875.0px;top:222.98px;color:#f1f1f1;font-size:7.3px;">Microsoft.Threading.Tasks.Extensions</div>
<svg style="left:863.5px;top:236.67000000000002px" width="8" height="5" viewBox="0 0 8 5"><rect x="0" y="1.2" width="2" height="2.2" fill="#f1f1f1"/><path d="M2 2.3H3.6" stroke="#f1f1f1" stroke-width="0.6"/><rect x="3.6" y="0.4" width="3.8" height="4" fill="#f1f1f1"/></svg>
<div class="t" style="left:875.0px;top:233.67px;color:#f1f1f1;font-size:7.3px;">Microsoft.Threading.Tasks.Extensions.Desktop</div>
<svg style="left:863.5px;top:247.36px" width="8" height="5" viewBox="0 0 8 5"><rect x="0" y="1.2" width="2" height="2.2" fill="#f1f1f1"/><path d="M2 2.3H3.6" stroke="#f1f1f1" stroke-width="0.6"/><rect x="3.6" y="0.4" width="3.8" height="4" fill="#f1f1f1"/></svg>
<div class="t" style="left:875.0px;top:244.36px;color:#f1f1f1;font-size:7.3px;">Microsoft.WindowsAPICodePack</div>
<svg style="left:863.5px;top:258.05px" width="8" height="5" viewBox="0 0 8 5"><rect x="0" y="1.2" width="2" height="2.2" fill="#f1f1f1"/><path d="M2 2.3H3.6" stroke="#f1f1f1" stroke-width="0.6"/><rect x="3.6" y="0.4" width="3.8" height="4" fill="#f1f1f1"/></svg>
<div class="t" style="left:875.0px;top:255.05px;color:#f1f1f1;font-size:7.3px;">Microsoft.WindowsAPICodePack.Shell</div>
<svg style="left:863.5px;top:268.74px" width="8" height="5" viewBox="0 0 8 5"><rect x="0" y="1.2" width="2" height="2.2" fill="#f1f1f1"/><path d="M2 2.3H3.6" stroke="#f1f1f1" stroke-width="0.6"/><rect x="3.6" y="0.4" width="3.8" height="4" fill="#f1f1f1"/></svg>
<div class="t" style="left:875.0px;top:265.74px;color:#f1f1f1;font-size:7.3px;">System</div>
<svg style="left:863.5px;top:279.43px" width="8" height="5" viewBox="0 0 8 5"><rect x="0" y="1.2" width="2" height="2.2" fill="#f1f1f1"/><path d="M2 2.3H3.6" stroke="#f1f1f1" stroke-width="0.6"/><rect x="3.6" y="0.4" width="3.8" height="4" fill="#f1f1f1"/></svg>
<div class="t" style="left:875.0px;top:276.43px;color:#f1f1f1;font-size:7.3px;">System.Core</div>
<svg style="left:863.5px;top:290.12px" width="8" height="5" viewBox="0 0 8 5"><rect x="0" y="1.2" width="2" height="2.2" fill="#f1f1f1"/><path d="M2 2.3H3.6" stroke="#f1f1f1" stroke-width="0.6"/><rect x="3.6" y="0.4" width="3.8" height="4" fill="#f1f1f1"/></svg>
<div class="t" style="left:875.0px;top:287.12px;color:#f1f1f1;font-size:7.3px;">System.Data</div>
<svg style="left:863.5px;top:300.81px" width="8" height="5" viewBox="0 0 8 5"><rect x="0" y="1.2" width="2" height="2.2" fill="#f1f1f1"/><path d="M2 2.3H3.6" stroke="#f1f1f1" stroke-width="0.6"/><rect x="3.6" y="0.4" width="3.8" height="4" fill="#f1f1f1"/></svg>
<div class="t" style="left:875.0px;top:297.81px;color:#f1f1f1;font-size:7.3px;">System.Data.DataSetExtensions</div>
<svg style="left:863.5px;top:311.5px" width="8" height="5" viewBox="0 0 8 5"><rect x="0" y="1.2" width="2" height="2.2" fill="#f1f1f1"/><path d="M2 2.3H3.6" stroke="#f1f1f1" stroke-width="0.6"/><rect x="3.6" y="0.4" width="3.8" height="4" fill="#f1f1f1"/></svg>
<div class="t" style="left:875.0px;top:308.5px;color:#f1f1f1;font-size:7.3px;">System.Deployment</div>
<svg style="left:863.5px;top:322.19px" width="8" height="5" viewBox="0 0 8 5"><rect x="0" y="1.2" width="2" height="2.2" fill="#f1f1f1"/><path d="M2 2.3H3.6" stroke="#f1f1f1" stroke-width="0.6"/><rect x="3.6" y="0.4" width="3.8" height="4" fill="#f1f1f1"/></svg>
<div class="t" style="left:875.0px;top:319.19px;color:#f1f1f1;font-size:7.3px;">System.Drawing</div>
<svg style="left:863.5px;top:332.88px" width="8" height="5" viewBox="0 0 8 5"><rect x="0" y="1.2" width="2" height="2.2" fill="#f1f1f1"/><path d="M2 2.3H3.6" stroke="#f1f1f1" stroke-width="0.6"/><rect x="3.6" y="0.4" width="3.8" height="4" fill="#f1f1f1"/></svg>
<div class="t" style="left:875.0px;top:329.88px;color:#f1f1f1;font-size:7.3px;">System.Net</div>
<svg style="left:863.5px;top:343.57px" width="8" height="5" viewBox="0 0 8 5"><rect x="0" y="1.2" width="2" height="2.2" fill="#f1f1f1"/><path d="M2 2.3H3.6" stroke="#f1f1f1" stroke-width="0.6"/><rect x="3.6" y="0.4" width="3.8" height="4" fill="#f1f1f1"/></svg>
<div class="t" style="left:875.0px;top:340.57px;color:#f1f1f1;font-size:7.3px;">System.Net.Http</div>
<svg style="left:863.5px;top:354.26px" width="8" height="5" viewBox="0 0 8 5"><rect x="0" y="1.2" width="2" height="2.2" fill="#f1f1f1"/><path d="M2 2.3H3.6" stroke="#f1f1f1" stroke-width="0.6"/><rect x="3.6" y="0.4" width="3.8" height="4" fill="#f1f1f1"/></svg>
<div class="t" style="left:875.0px;top:351.26px;color:#f1f1f1;font-size:7.3px;">System.ValueTuple</div>
<svg style="left:863.5px;top:364.95px" width="8" height="5" viewBox="0 0 8 5"><rect x="0" y="1.2" width="2" height="2.2" fill="#f1f1f1"/><path d="M2 2.3H3.6" stroke="#f1f1f1" stroke-width="0.6"/><rect x="3.6" y="0.4" width="3.8" height="4" fill="#f1f1f1"/></svg>
<div class="t" style="left:875.0px;top:361.95px;color:#f1f1f1;font-size:7.3px;">System.Windows.Forms</div>
<svg style="left:863.5px;top:375.64px" width="8" height="5" viewBox="0 0 8 5"><rect x="0" y="1.2" width="2" height="2.2" fill="#f1f1f1"/><path d="M2 2.3H3.6" stroke="#f1f1f1" stroke-width="0.6"/><rect x="3.6" y="0.4" width="3.8" height="4" fill="#f1f1f1"/></svg>
<div class="t" style="left:875.0px;top:372.64px;color:#f1f1f1;font-size:7.3px;">System.Xml</div>
<svg style="left:863.5px;top:386.33px" width="8" height="5" viewBox="0 0 8 5"><rect x="0" y="1.2" width="2" height="2.2" fill="#f1f1f1"/><path d="M2 2.3H3.6" stroke="#f1f1f1" stroke-width="0.6"/><rect x="3.6" y="0.4" width="3.8" height="4" fill="#f1f1f1"/></svg>
<div class="t" style="left:875.0px;top:383.33px;color:#f1f1f1;font-size:7.3px;">System.Xml.Linq</div>
<svg style="left:853.5px;top:395.71999999999997px" width="8" height="7.6" viewBox="0 0 8 7.6"><path d="M2.6 0.5H5.6L7.4 2.3V7H2.6Z" fill="none" stroke="#e0e0e0" stroke-width="0.8"/><path d="M0.2 2.4 1.4 3.4 2 5.6 1.2 7" fill="none" stroke="#e0e0e0" stroke-width="0.9"/></svg>
<div class="t" style="left:865.0px;top:394.02px;color:#f1f1f1;font-size:7.3px;">App.config</div>
<svg style="left:841.5px;top:407.40999999999997px" width="3.2" height="5.6" viewBox="0 0 3.2 5.6"><path d="M0.4 0.5 2.8 2.8 0.4 5.1Z" fill="none" stroke="#f1f1f1" stroke-width="0.7"/></svg>
<svg style="left:853.5px;top:407.01px" width="8" height="6.5" viewBox="0 0 8 6.5"><rect x="0.4" y="0.4" width="7" height="5.7" fill="none" stroke="#e0e0e0" stroke-width="0.8"/><path d="M0.4 1.8H7.4" stroke="#e0e0e0" stroke-width="0.9"/><path d="M1.6 3.2H4.6M1.6 4.6H6" stroke="#c0c0c0" stroke-width="0.7"/></svg>
<div class="t" style="left:865.0px;top:404.71px;color:#f1f1f1;font-size:7.3px;">Form1.cs</div>
<svg style="left:841.5px;top:418.09999999999997px" width="3.2" height="5.6" viewBox="0 0 3.2 5.6"><path d="M0.4 0.5 2.8 2.8 0.4 5.1Z" fill="none" stroke="#f1f1f1" stroke-width="0.7"/></svg>
<svg style="left:853.5px;top:417.7px" width="8" height="6.5" viewBox="0 0 8 6.5"><rect x="0.4" y="0.4" width="7" height="5.7" fill="none" stroke="#e0e0e0" stroke-width="0.8"/><path d="M0.4 1.8H7.4" stroke="#e0e0e0" stroke-width="0.9"/><path d="M1.6 3.2H4.6M1.6 4.6H6" stroke="#c0c0c0" stroke-width="0.7"/></svg>
<div class="t" style="left:865.0px;top:415.4px;color:#f1f1f1;font-size:7.3px;">Form2.cs</div>
<svg style="left:841.5px;top:428.78999999999996px" width="3.2" height="5.6" viewBox="0 0 3.2 5.6"><path d="M0.4 0.5 2.8 2.8 0.4 5.1Z" fill="none" stroke="#f1f1f1" stroke-width="0.7"/></svg>
<svg style="left:853.5px;top:428.39px" width="8" height="6.5" viewBox="0 0 8 6.5"><rect x="0.4" y="0.4" width="7" height="5.7" fill="none" stroke="#e0e0e0" stroke-width="0.8"/><path d="M0.4 1.8H7.4" stroke="#e0e0e0" stroke-width="0.9"/><path d="M1.6 3.2H4.6M1.6 4.6H6" stroke="#c0c0c0" stroke-width="0.7"/></svg>
<div class="t" style="left:865.0px;top:426.09px;color:#f1f1f1;font-size:7.3px;">Form3.cs</div>
<svg style="left:841.5px;top:439.47999999999996px" width="3.2" height="5.6" viewBox="0 0 3.2 5.6"><path d="M0.4 0.5 2.8 2.8 0.4 5.1Z" fill="none" stroke="#f1f1f1" stroke-width="0.7"/></svg>
<svg style="left:853.5px;top:439.08px" width="8" height="6.5" viewBox="0 0 8 6.5"><rect x="0.4" y="0.4" width="7" height="5.7" fill="none" stroke="#e0e0e0" stroke-width="0.8"/><path d="M0.4 1.8H7.4" stroke="#e0e0e0" stroke-width="0.9"/><path d="M1.6 3.2H4.6M1.6 4.6H6" stroke="#c0c0c0" stroke-width="0.7"/></svg>
<div class="t" style="left:865.0px;top:436.78px;color:#f1f1f1;font-size:7.3px;">Form4.cs</div>
<svg style="left:841.5px;top:450.16999999999996px" width="3.2" height="5.6" viewBox="0 0 3.2 5.6"><path d="M0.4 0.5 2.8 2.8 0.4 5.1Z" fill="none" stroke="#f1f1f1" stroke-width="0.7"/></svg>
<svg style="left:853.5px;top:449.77px" width="8" height="6.5" viewBox="0 0 8 6.5"><rect x="0.4" y="0.4" width="7" height="5.7" fill="none" stroke="#e0e0e0" stroke-width="0.8"/><path d="M0.4 1.8H7.4" stroke="#e0e0e0" stroke-width="0.9"/><path d="M1.6 3.2H4.6M1.6 4.6H6" stroke="#c0c0c0" stroke-width="0.7"/></svg>
<div class="t" style="left:865.0px;top:447.47px;color:#f1f1f1;font-size:7.3px;">Form5.cs</div>
<svg style="left:841.5px;top:460.85999999999996px" width="3.2" height="5.6" viewBox="0 0 3.2 5.6"><path d="M0.4 0.5 2.8 2.8 0.4 5.1Z" fill="none" stroke="#f1f1f1" stroke-width="0.7"/></svg>
<svg style="left:853.5px;top:459.85999999999996px" width="8.5" height="7.6" viewBox="0 0 8.5 7.6"><rect x="3.4" y="0.4" width="4.6" height="3.6" fill="#d8d8d8"/><path d="M0.6 3.2V6.4A1.8 0.8 0 0 0 4.2 6.4V3.2" fill="#2a2a2c" stroke="#d8d8d8" stroke-width="0.7"/><ellipse cx="2.4" cy="3.2" rx="1.8" ry="0.8" fill="#d8d8d8"/><path d="M5.2 4.4V6.6H7.4V4" fill="none" stroke="#d8d8d8" stroke-width="0.7"/></svg>
<div class="t" style="left:865.0px;top:458.16px;color:#f1f1f1;font-size:7.3px;">JavaTestDataSet.xsd</div>
<svg style="left:841.5px;top:471.54999999999995px" width="3.2" height="5.6" viewBox="0 0 3.2 5.6"><path d="M0.4 0.5 2.8 2.8 0.4 5.1Z" fill="none" stroke="#f1f1f1" stroke-width="0.7"/></svg>
<div class="t" style="left:853.9px;top:468.15px;color:#8ad88a;font-size:6.2px;font-weight:bold;letter-spacing:-0.5px">C#</div>
<div class="t" style="left:865.0px;top:468.85px;color:#f1f1f1;font-size:7.3px;">log.cs</div>
<svg style="left:841.5px;top:482.23999999999995px" width="3.2" height="5.6" viewBox="0 0 3.2 5.6"><path d="M0.4 0.5 2.8 2.8 0.4 5.1Z" fill="none" stroke="#f1f1f1" stroke-width="0.7"/></svg>
<div class="t" style="left:853.9px;top:478.84px;color:#8ad88a;font-size:6.2px;font-weight:bold;letter-spacing:-0.5px">C#</div>
<div class="t" style="left:865.0px;top:479.54px;color:#f1f1f1;font-size:7.3px;">ModbusTool.cs</div>
<svg style="left:853.5px;top:491.92999999999995px" width="8" height="7.6" viewBox="0 0 8 7.6"><path d="M2.6 0.5H5.6L7.4 2.3V7H2.6Z" fill="none" stroke="#e0e0e0" stroke-width="0.8"/><path d="M0.2 2.4 1.4 3.4 2 5.6 1.2 7" fill="none" stroke="#e0e0e0" stroke-width="0.9"/></svg>
<div class="t" style="left:865.0px;top:490.23px;color:#f1f1f1;font-size:7.3px;">packages.config</div>
<svg style="left:841.5px;top:503.61999999999995px" width="3.2" height="5.6" viewBox="0 0 3.2 5.6"><path d="M0.4 0.5 2.8 2.8 0.4 5.1Z" fill="none" stroke="#f1f1f1" stroke-width="0.7"/></svg>
<div class="t" style="left:853.9px;top:500.22px;color:#8ad88a;font-size:6.2px;font-weight:bold;letter-spacing:-0.5px">C#</div>
<div class="t" style="left:865.0px;top:500.92px;color:#f1f1f1;font-size:7.3px;">Program.cs</div>
<svg style="left:841.5px;top:514.3100000000001px" width="3.2" height="5.6" viewBox="0 0 3.2 5.6"><path d="M0.4 0.5 2.8 2.8 0.4 5.1Z" fill="none" stroke="#f1f1f1" stroke-width="0.7"/></svg>
<div class="t" style="left:853.9px;top:510.91px;color:#8ad88a;font-size:6.2px;font-weight:bold;letter-spacing:-0.5px">C#</div>
<div class="t" style="left:865.0px;top:511.61px;color:#f1f1f1;font-size:7.3px;">TcpServerExample.cs</div>
<svg style="left:841.5px;top:525.0px" width="3.2" height="5.6" viewBox="0 0 3.2 5.6"><path d="M0.4 0.5 2.8 2.8 0.4 5.1Z" fill="none" stroke="#f1f1f1" stroke-width="0.7"/></svg>
<div class="t" style="left:853.9px;top:521.6px;color:#8ad88a;font-size:6.2px;font-weight:bold;letter-spacing:-0.5px">C#</div>
<div class="t" style="left:865.0px;top:522.3px;color:#f1f1f1;font-size:7.3px;">VGMXTcp.cs</div>
<div style="left:75.3px;top:71.1px;width:177.7px;height:29px;background:transparent;border:2px solid #ee1f14;border-radius:3px"></div>
<div style="left:833px;top:149.6px;width:129px;height:22.8px;background:transparent;border:2px solid #ee1f14;border-radius:3px"></div>
<div class="t" style="left:1042px;top:72px;width:56px;text-align:left;color:#d0d0d0;font-size:7.3px;transform:rotate(90deg);transform-origin:50% 50%">Pending Changes</div>
<div class="t" style="left:1062px;top:114px;width:16px;text-align:center;color:#d0d0d0;font-size:6.8px;transform:rotate(90deg);transform-origin:50% 50%">属性</div>
<div style="left:1077px;top:48.5px;width:3px;height:58px;background:#3f3f46;"></div>
<div style="left:1077px;top:112.5px;width:3px;height:14.5px;background:#3f3f46;"></div>
<div class="t" style="left:18px;top:556.2px;color:#d0d0d0;font-size:7.3px;"><span class="k">错误列表</span></div>
<div style="left:17.5px;top:568.3px;width:28px;height:2.5px;background:#3a3a3f;"></div>
<div class="t" style="left:51px;top:556.2px;color:#d0d0d0;font-size:7.3px;"><span class="k">输出</span></div>
<div style="left:50.5px;top:568.3px;width:15px;height:2.5px;background:#3a3a3f;"></div>
<div class="t" style="left:72px;top:556.2px;color:#d0d0d0;font-size:7.3px;">Web <span class="k">发布活动</span></div>
<div style="left:71.5px;top:568.3px;width:45.5px;height:2.5px;background:#3a3a3f;"></div>
<div class="t" style="left:123px;top:556.2px;color:#d0d0d0;font-size:7.3px;"><span class="k">调用层次结构</span></div>
<div style="left:122.5px;top:568.3px;width:42px;height:2.5px;background:#3a3a3f;"></div>
<div class="t" style="left:170px;top:556.2px;color:#d0d0d0;font-size:7.3px;">CodeLens</div>
<div style="left:169.5px;top:568.3px;width:31px;height:2.5px;background:#3a3a3f;"></div>
<div style="left:0px;top:570.8px;width:1080px;height:15px;background:#007acc;"></div>
<svg style="left:2.4px;top:574.8px" width="10" height="7" viewBox="0 0 10 7"><path d="M2 0.5H9.3L8 6.5H0.7Z" fill="none" stroke="#ffffff" stroke-width="0.9"/></svg>
<div class="t" style="left:16.2px;top:573.1px;color:#ffffff;font-size:7.3px;"><span class="k">就绪</span></div>
<div class="t" style="left:653px;top:573.1px;color:#ffffff;font-size:7.3px;"><span class="k">行</span> 151</div>
<div class="t" style="left:705px;top:573.1px;color:#ffffff;font-size:7.3px;"><span class="k">列</span> 36</div>
<div class="t" style="left:756px;top:573.1px;color:#ffffff;font-size:7.3px;"><span class="k">字符</span> 36</div>
<div class="t" style="left:833px;top:573.1px;color:#ffffff;font-size:7.3px;">Ins</div>
<svg style="left:999px;top:575px" width="5" height="7" viewBox="0 0 5 7"><path d="M2.5 7V0.8M0.3 3 2.5 0.6 4.7 3" fill="none" stroke="#ffffff" stroke-width="1"/></svg>
<div class="t" style="left:1010px;top:573.1px;color:#ffffff;font-size:7.3px;"><span class="k">添加到源代码管理</span></div>
<svg style="left:1067px;top:577px" width="4" height="2.4" viewBox="0 0 4 2.4"><path d="M0 2.4 2 0 4 2.4Z" fill="#ffffff"/></svg>
<div style="left:568px;top:571px;width:85px;height:13.5px;background:#f6f6f6;"></div>
<svg style="left:561.2px;top:568.6px" width="15" height="15" viewBox="0 0 15 15"><g transform="rotate(-6 7.5 7.5)"><rect x="1" y="1" width="13" height="13.4" rx="2.2" fill="#2fb344"/></g></svg>
<div class="t" style="left:561.2px;top:569.6px;width:15px;text-align:center;height:13px;line-height:13px;color:#ffffff;font-size:13px;font-weight:bold;font-style:italic;transform:rotate(-6deg) scaleX(1.3)">S</div>
<div class="t" style="left:579.3px;top:572.1px;color:#222222;font-size:8.6px;font-weight:bold">五</div>
<svg style="left:592.6px;top:573.6px" width="8" height="8" viewBox="0 0 8 8"><path d="M5.4 0.3A3.9 3.9 0 1 1 0.3 5.4A3.2 3.2 0 0 0 5.4 0.3Z" fill="#2a2a2a" stroke="#2a2a2a" stroke-width="0.8"/></svg>
<svg style="left:605.6px;top:575px" width="6" height="6" viewBox="0 0 6 6"><circle cx="1.2" cy="1.2" r="0.9" fill="#333"/><path d="M4.2 2.4A1 1 0 1 1 4.2 4.2L3.4 5.6Q4.6 4.8 4.2 2.4Z" fill="#333" stroke="#333" stroke-width="0.5"/></svg>
<svg style="left:616.6px;top:574.4px" width="9" height="6.4" viewBox="0 0 9 6.4"><rect x="0.4" y="0.4" width="8.2" height="5.6" fill="none" stroke="#333" stroke-width="0.8"/><path d="M1.6 2H7.4M1.6 3.4H7.4" stroke="#333" stroke-width="0.8" stroke-dasharray="1 0.6"/><path d="M2.4 4.8H6.6" stroke="#333" stroke-width="0.8"/></svg>
<svg style="left:630.3px;top:574px" width="7" height="8" viewBox="0 0 7 8"><circle cx="3.5" cy="2" r="1.7" fill="#333"/><path d="M0.3 7.4C0.3 3.4 6.7 3.4 6.7 7.4Z" fill="#333"/></svg>
<svg style="left:641.5px;top:574.2px" width="8" height="8" viewBox="0 0 8 8"><rect x="0.4" y="0.4" width="3" height="3" rx="0.8" fill="#333"/><rect x="4.4" y="0.4" width="3" height="3" rx="0.8" fill="#333"/><rect x="0.4" y="4.4" width="3" height="3" rx="0.8" fill="#333"/><rect x="4.4" y="4.4" width="3" height="3" rx="0.8" fill="#333"/></svg>
<div style="left:0px;top:585px;width:1080px;height:5px;background:#10262e;"></div>
<div style="left:27px;top:585.4px;width:161.5px;height:4.6px;background:#f2f2f2;"></div>
<div style="left:300px;top:585.4px;width:27px;height:4.6px;background:#3a4f57;"></div>
<div style="left:170px;top:587.5px;width:6px;height:2.5px;background:#d08a3c;"></div>
<div style="left:1021px;top:588.6px;width:5px;height:1.4px;background:#a8b4b8;"></div>
<div style="left:1028px;top:588.6px;width:6px;height:1.4px;background:#a8b4b8;"></div>
</body></html>
